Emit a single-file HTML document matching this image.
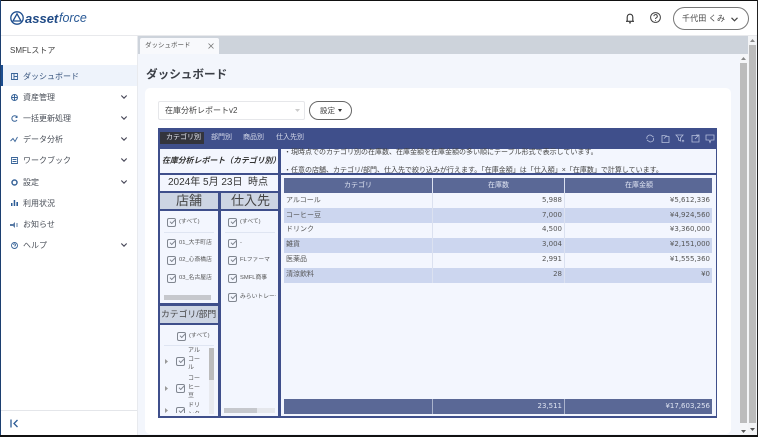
<!DOCTYPE html>
<html lang="ja"><head><meta charset="utf-8"><style>
*{box-sizing:border-box}
html,body{margin:0;padding:0;width:758px;height:437px;overflow:hidden;background:#fff}
body{font-family:"Liberation Sans","Noto Sans CJK JP",sans-serif;color:#444;position:relative}
.a,.a *{position:absolute}
.a{left:0;top:0;width:758px;height:437px;overflow:hidden;filter:blur(.35px)}
.t{white-space:nowrap;line-height:1}
.nav{font-size:8px;color:#4a4f58;left:23px}
.b{background:#f3f6fe}
.r{height:15px;left:284px;width:428px}
.c{font-size:7px;color:#555;white-space:nowrap;line-height:1}
.n{font-family:'DejaVu Sans',sans-serif;font-size:7px}
.chk{width:8.500px;height:8.500px;border:1px solid #808690;border-radius:2px}
.chk:after{content:"";position:absolute;left:1.500px;top:1px;width:3.500px;height:2px;border-left:1px solid #808690;border-bottom:1px solid #808690;transform:rotate(-45deg)}
.l{font-size:5.800px;color:#555;white-space:nowrap;line-height:1}
.w{font-size:6px;line-height:8.700px;white-space:normal;width:13px;color:#555;word-break:break-all}
svg{overflow:visible}
</style></head><body><div class="a">
<!-- header -->
<div style="left:0;top:0;width:758px;height:1px;background:#111"></div>
<svg style="left:10px;top:11px" width="14" height="14" viewBox="0 0 14 14" fill="none" stroke="#1f4f8f" stroke-width="1.300"><circle cx="7" cy="7" r="6.200"/><path d="M7 2.800 11 10H3Z"/></svg>
<div class="t" style="left:25px;top:12px;font-size:13px;font-weight:bold;font-style:italic;color:#1f4a86">asset</div>
<div class="t" style="left:59px;top:12px;font-size:12.500px;font-style:italic;color:#2a5a96">force</div>
<svg style="left:625px;top:12px" width="10" height="12" viewBox="0 0 10 12" fill="none" stroke="#333" stroke-width="1.100"><path d="M1 9.300h8M2.200 9V5a2.800 2.800 0 0 1 5.600 0v4M4 10.800h2"/></svg>
<svg style="left:650px;top:12px" width="11" height="11" viewBox="0 0 11 11" fill="none" stroke="#444" stroke-width="1"><circle cx="5.500" cy="5.500" r="4.900"/><path d="M3.900 4.200a1.700 1.700 0 1 1 2.400 1.600c-.6.3-.8.6-.8 1.200M5.500 8v.8"/></svg>
<div style="left:673px;top:7px;width:76px;height:23px;border:1px solid #777;border-radius:12px;background:#fff"></div>
<div class="t" style="left:682px;top:15px;font-size:8px;color:#444;letter-spacing:.1px">千代田 くみ</div>
<svg style="left:731px;top:17px" width="7" height="5" viewBox="0 0 7 5" fill="none" stroke="#444" stroke-width="1.200"><path d="M.5 .8 3.500 3.800 6.500 .8"/></svg>
<div style="left:0;top:35px;width:758px;height:1px;background:#e8e9ec"></div>

<!-- sidebar -->
<div style="left:137px;top:36px;width:1px;height:400px;background:#e8eaee"></div>
<div class="t" style="left:10px;top:47px;font-size:8px;color:#444">SMFLストア</div>
<div style="left:1px;top:65px;width:136px;height:21px;background:#eef3fb"></div>
<div style="left:1px;top:65px;width:2px;height:21px;background:#1d4e8f"></div>
<div style="left:0;top:0;width:1px;height:437px;background:#1c3f70"></div>

<svg style="left:11px;top:73px" width="7" height="7" viewBox="0 0 7 7" fill="none" stroke="#3a6599" stroke-width=".9"><path d="M.5.5h6v6h-6zM3 .5v6M3 3.500h3.500"/></svg>
<div class="t nav" style="top:73px;color:#33507a">ダッシュボード</div>
<svg style="left:11px;top:94px" width="7" height="7" viewBox="0 0 7 7" fill="none" stroke="#3a6599" stroke-width="1"><circle cx="3.500" cy="3.500" r="3"/><path d="M.5 3.500h6M3.500.5v6"/></svg>
<div class="t nav" style="top:94px">資産管理</div>
<svg style="left:11px;top:115px" width="7" height="7" viewBox="0 0 7 7" fill="none" stroke="#3a6599" stroke-width="1"><path d="M6 2A2.800 2.800 0 1 0 6 5M6 .8V2.500H4.500"/></svg>
<div class="t nav" style="top:115px">一括更新処理</div>
<svg style="left:10px;top:136px" width="8" height="7" viewBox="0 0 8 7" fill="none" stroke="#3a6599" stroke-width=".9"><path d="M.5 5 3 2.500 5 5.500 7.500 1"/></svg>
<div class="t nav" style="top:136px">データ分析</div>
<svg style="left:11px;top:157px" width="7" height="7" viewBox="0 0 7 7" fill="none" stroke="#3a6599" stroke-width=".9"><path d="M.5.5h6v6h-6zM1.500 2.500h4M1.500 4.500h4"/></svg>
<div class="t nav" style="top:157px">ワークブック</div>
<svg style="left:11px;top:179px" width="7" height="7" viewBox="0 0 7 7" fill="none" stroke="#3a6599" stroke-width="1.500"><circle cx="3.500" cy="3.500" r="2.500"/></svg>
<div class="t nav" style="top:179px">設定</div>
<svg style="left:11px;top:200px" width="7" height="6" viewBox="0 0 7 6" fill="#2d5c96"><path d="M0 3h1.500v3H0zM2.700 0h1.500v6H2.700zM5.400 2H7v4H5.400z"/></svg>
<div class="t nav" style="top:200px">利用状況</div>
<svg style="left:10px;top:222px" width="8" height="6" viewBox="0 0 8 6" fill="#5a7ba5"><path d="M0 2h3l2-2v6L3 4H0z"/><path d="M6 1.500h2v1H6zM6 3.500h2v1H6z"/></svg>
<div class="t nav" style="top:221px">お知らせ</div>
<svg style="left:11px;top:242px" width="7" height="7" viewBox="0 0 7 7" fill="none" stroke="#3a6599" stroke-width=".9"><circle cx="3.500" cy="3.500" r="3"/><path d="M2.500 2.800a1 1 0 1 1 1.300 1V4.500"/></svg>
<div class="t nav" style="top:242px">ヘルプ</div>
<svg style="left:121px;top:95px" width="6" height="4" viewBox="0 0 6 4" fill="none" stroke="#445" stroke-width="1.100"><path d="M.3.500 3 3.200 5.700.5"/></svg>
<svg style="left:121px;top:116px" width="6" height="4" viewBox="0 0 6 4" fill="none" stroke="#445" stroke-width="1.100"><path d="M.3.500 3 3.200 5.700.5"/></svg>
<svg style="left:121px;top:137px" width="6" height="4" viewBox="0 0 6 4" fill="none" stroke="#445" stroke-width="1.100"><path d="M.3.500 3 3.200 5.700.5"/></svg>
<svg style="left:121px;top:158px" width="6" height="4" viewBox="0 0 6 4" fill="none" stroke="#445" stroke-width="1.100"><path d="M.3.500 3 3.200 5.700.5"/></svg>
<svg style="left:121px;top:180px" width="6" height="4" viewBox="0 0 6 4" fill="none" stroke="#445" stroke-width="1.100"><path d="M.3.500 3 3.200 5.700.5"/></svg>
<svg style="left:121px;top:243px" width="6" height="4" viewBox="0 0 6 4" fill="none" stroke="#445" stroke-width="1.100"><path d="M.3.500 3 3.200 5.700.5"/></svg>
<div style="left:1px;top:410px;width:136px;height:1px;background:#e4e6ea"></div>
<svg style="left:10px;top:419px" width="9" height="9" viewBox="0 0 9 9" fill="none" stroke="#2d5c96" stroke-width="1.300"><path d="M1 .5v8M7.500 1 4 4.500 7.500 8"/></svg>

<!-- main -->
<div style="left:138px;top:36px;width:619px;height:400px;background:#f3f6fc"></div>
<div style="left:138px;top:36px;width:610px;height:18px;background:#cdd3db"></div>
<div style="left:140px;top:38px;width:79px;height:16px;background:#f8f9fc;border-radius:2px 2px 0 0"></div>
<div class="t" style="left:145px;top:43px;font-size:6.500px;color:#555">ダッシュボード</div>
<svg style="left:208px;top:43px" width="6" height="6" viewBox="0 0 6 6" stroke="#777" stroke-width=".8"><path d="M.5.5l5 5M5.500.5l-5 5"/></svg>
<div class="t" style="left:146px;top:69px;font-size:11.600px;color:#3b3f46;font-weight:bold">ダッシュボード</div>

<!-- scrollbars -->
<div style="left:748px;top:36px;width:9px;height:400px;background:#f3f4f6"></div>
<div style="left:749px;top:45px;width:7px;height:378px;background:#bcbcbc"></div>
<div style="left:740px;top:54px;width:8px;height:382px;background:#f5f6f8"></div>
<div style="left:740px;top:63px;width:7px;height:360px;background:#bcbcbc"></div>
<svg style="left:750px;top:39px" width="5" height="3"><path d="M2.500 0 5 3H0z" fill="#888"/></svg>
<svg style="left:741px;top:57px" width="5" height="3"><path d="M2.500 0 5 3H0z" fill="#888"/></svg>
<svg style="left:750px;top:428px" width="5" height="3"><path d="M0 0h5L2.500 3z" fill="#555"/></svg>
<svg style="left:741px;top:430px" width="5" height="3"><path d="M0 0h5L2.500 3z" fill="#555"/></svg>

<!-- card -->
<div style="left:145px;top:88px;width:586px;height:346px;background:#fff;border-radius:5px"></div>
<div style="left:158px;top:101px;width:147px;height:19px;background:#fff;border:1px solid #e6e7ea;border-radius:2px"></div>
<div class="t" style="left:165px;top:107px;font-size:8px;color:#444">在庫分析レポートv2</div>
<svg style="left:295px;top:109px" width="5" height="3"><path d="M0 0h5L2.500 3z" fill="#ccc"/></svg>
<div style="left:309px;top:101px;width:43px;height:19px;border:1px solid #666;border-radius:10px;background:#fff"></div>
<div class="t" style="left:320px;top:107px;font-size:7.500px;color:#444">設定</div>
<svg style="left:338px;top:109px" width="4" height="3"><path d="M0 0h4L2 3z" fill="#333"/></svg>

<!-- dashboard frame -->
<div style="left:158px;top:128px;width:559px;height:290px;background:#3f4f8b"></div>
<div style="left:160px;top:132px;width:44px;height:12px;background:#33343c"></div>
<div class="t" style="left:166px;top:134px;font-size:7px;color:#e6e8f0">カテゴリ別</div>
<div class="t" style="left:211px;top:134px;font-size:7px;color:#d5daea">部門別</div>
<div class="t" style="left:243px;top:134px;font-size:7px;color:#d5daea">商品別</div>
<div class="t" style="left:276px;top:134px;font-size:7px;color:#d5daea">仕入先別</div>
<svg style="left:646px;top:134px" width="68" height="9" viewBox="0 0 68 9" fill="none" stroke="#b5bedb" stroke-width=".8"><path d="M1 5a3 3 0 0 1 5-3l1.500 1M7.500 4a3 3 0 0 1-5 3L1 6M16 1.500h3l1 1h3v6h-7zM18 4.500l3-3"/><path d="M30 1h7l-2.500 3v3l-2-1V4zM36 6l2 2M38 6l-2 2"/><path d="M46 1.500h7v6.500h-7zM49 5l4-4M50 1h3v3"/><path d="M60 1h8v5h-3l-1 2.500L63 6h-3z"/></svg>

<!-- title + description -->
<div class="b" style="left:160px;top:149px;width:118px;height:24px"></div>
<div class="t" style="left:162px;top:157px;font-size:7.900px;font-style:italic;font-weight:bold;color:#333">在庫分析レポート（カテゴリ別）</div>
<div class="b" style="left:281px;top:149px;width:435px;height:24px"></div>
<div class="t" style="left:284px;top:149px;font-size:7px;color:#444">・現時点でのカテゴリ別の在庫数、在庫金額を在庫金額の多い順にテーブル形式で表示しています。</div>
<div class="t" style="left:284px;top:167px;font-size:7px;color:#444">・任意の店舗、カテゴリ/部門、仕入先で絞り込みが行えます。「在庫金額」は「仕入額」×「在庫数」で計算しています。</div>

<!-- date -->
<div class="b" style="left:160px;top:175px;width:118px;height:16px"></div>
<div class="t" style="left:168px;top:178px;font-size:10px;color:#333">2024年 5月 23日&nbsp; 時点</div>

<!-- filter headers -->
<div style="left:160px;top:193px;width:58px;height:16px;background:#cdd5e3"></div>
<div class="t" style="left:176px;top:194px;font-size:13px;color:#444">店舗</div>
<div style="left:221px;top:193px;width:57px;height:16px;background:#cdd5e3"></div>
<div class="t" style="left:231px;top:194px;font-size:13px;color:#444">仕入先</div>

<!-- store list -->
<div class="b" style="left:160px;top:211px;width:58px;height:92px"></div>
<div class="chk" style="left:167px;top:218px"></div><div class="l" style="left:179px;top:220px">(すべて)</div>
<div style="left:164px;top:232px;width:50px;height:1px;background:#dfe5f2"></div>
<div class="chk" style="left:167px;top:239px"></div><div class="l" style="left:179px;top:241px">01_大手町店</div>
<div class="chk" style="left:167px;top:256px"></div><div class="l" style="left:179px;top:258px">02_心斎橋店</div>
<div class="chk" style="left:167px;top:274px"></div><div class="l" style="left:179px;top:276px">03_名古屋店</div>
<div style="left:164px;top:295px;width:47px;height:5px;background:#c6c8cd"></div>

<!-- supplier list -->
<div class="b" style="left:221px;top:211px;width:57px;height:205px"></div>
<div class="chk" style="left:228px;top:218px"></div><div class="l" style="left:240px;top:220px">(すべて)</div>
<div style="left:225px;top:232px;width:50px;height:1px;background:#dfe5f2"></div>
<div class="chk" style="left:228px;top:239px"></div><div class="l" style="left:240px;top:241px">-</div>
<div class="chk" style="left:228px;top:256px"></div><div class="l" style="left:240px;top:258px">FLファーマ</div>
<div class="chk" style="left:228px;top:274px"></div><div class="l" style="left:240px;top:276px">SMFL商事</div>
<div class="chk" style="left:228px;top:293px"></div>
<div style="left:221px;top:290px;width:55px;height:14px;overflow:hidden"><div class="l" style="left:19px;top:5px">みらいトレーデ</div></div>
<div style="left:224px;top:408px;width:51px;height:5px;background:#e5e7ec"></div>
<div style="left:224px;top:408px;width:33px;height:5px;background:#c6c8cd"></div>

<!-- category -->
<div style="left:160px;top:306px;width:58px;height:17px;background:#cdd5e3"></div>
<div class="t" style="left:161px;top:310px;font-size:8.800px;color:#444">カテゴリ/部門</div>
<div class="b" style="left:160px;top:325px;width:58px;height:91px"></div>
<div class="chk" style="left:177px;top:332px"></div><div class="l" style="left:189px;top:334px">(すべて)</div>
<div style="left:164px;top:345px;width:50px;height:1px;background:#dfe5f2"></div>
<div style="left:209px;top:348px;width:5px;height:66px;background:#e8eaef"></div>
<div style="left:209px;top:348px;width:5px;height:32px;background:#bcbcbc"></div>
<svg style="left:165px;top:359px" width="3" height="5"><path d="M0 0 3 2.500 0 5z" fill="#999"/></svg>
<div class="chk" style="left:176px;top:357px"></div>
<div class="w" style="left:188px;top:347px">アルコール</div>
<svg style="left:165px;top:386px" width="3" height="5"><path d="M0 0 3 2.500 0 5z" fill="#999"/></svg>
<div class="chk" style="left:176px;top:384px"></div>
<div class="w" style="left:188px;top:375px">コーヒー豆</div>
<div style="left:160px;top:402px;width:49px;height:11px;overflow:hidden">
<svg style="left:5px;top:6px" width="3" height="5"><path d="M0 0 3 2.500 0 5z" fill="#999"/></svg>
<div class="chk" style="left:16px;top:5px"></div>
<div class="w" style="left:28px;top:0">ドリンク</div>
</div>

<!-- table -->
<div class="b" style="left:281px;top:175px;width:435px;height:241px"></div>
<div style="left:284px;top:178px;width:428px;height:15px;background:#5a6896"></div>
<div class="c" style="left:344px;top:182px;color:#dfe4f2">カテゴリ</div>
<div class="c" style="left:488px;top:182px;color:#dfe4f2">在庫数</div>
<div class="c" style="left:625px;top:182px;color:#dfe4f2">在庫金額</div>
<div class="r" style="top:208px;background:#ccd6ef"></div>
<div class="r" style="top:238px;background:#ccd6ef"></div>
<div class="r" style="top:268px;background:#ccd6ef"></div>
<div style="left:432px;top:178px;width:1px;height:105px;background:#dbe1f0"></div>
<div style="left:564px;top:178px;width:1px;height:105px;background:#dbe1f0"></div>
<div class="c" style="left:286px;top:197px">アルコール</div>
<div class="c" style="left:286px;top:212px">コーヒー豆</div>
<div class="c" style="left:286px;top:226px">ドリンク</div>
<div class="c" style="left:286px;top:241px">雑貨</div>
<div class="c" style="left:286px;top:256px">医薬品</div>
<div class="c" style="left:286px;top:271px">清涼飲料</div>
<div class="c n" style="right:196px;top:197px">5,988</div>
<div class="c n" style="right:196px;top:212px">7,000</div>
<div class="c n" style="right:196px;top:226px">4,500</div>
<div class="c n" style="right:196px;top:241px">3,004</div>
<div class="c n" style="right:196px;top:256px">2,991</div>
<div class="c n" style="right:196px;top:271px">28</div>
<div class="c n" style="right:48px;top:197px">¥5,612,336</div>
<div class="c n" style="right:48px;top:212px">¥4,924,560</div>
<div class="c n" style="right:48px;top:226px">¥3,360,000</div>
<div class="c n" style="right:48px;top:241px">¥2,151,000</div>
<div class="c n" style="right:48px;top:256px">¥1,555,360</div>
<div class="c n" style="right:48px;top:271px">¥0</div>
<div style="left:284px;top:399px;width:428px;height:15px;background:#5a6896"></div>
<div style="left:432px;top:399px;width:1px;height:15px;background:#aab3cc"></div>
<div style="left:564px;top:399px;width:1px;height:15px;background:#aab3cc"></div>
<div class="c n" style="right:196px;top:403px;color:#dfe4f2">23,511</div>
<div class="c n" style="right:48px;top:403px;color:#dfe4f2">¥17,603,256</div>

<!-- outer borders -->
<div style="left:757px;top:0;width:1px;height:437px;background:#222"></div>
<div style="left:0;top:435px;width:758px;height:2px;background:#111"></div>
</div></body></html>
